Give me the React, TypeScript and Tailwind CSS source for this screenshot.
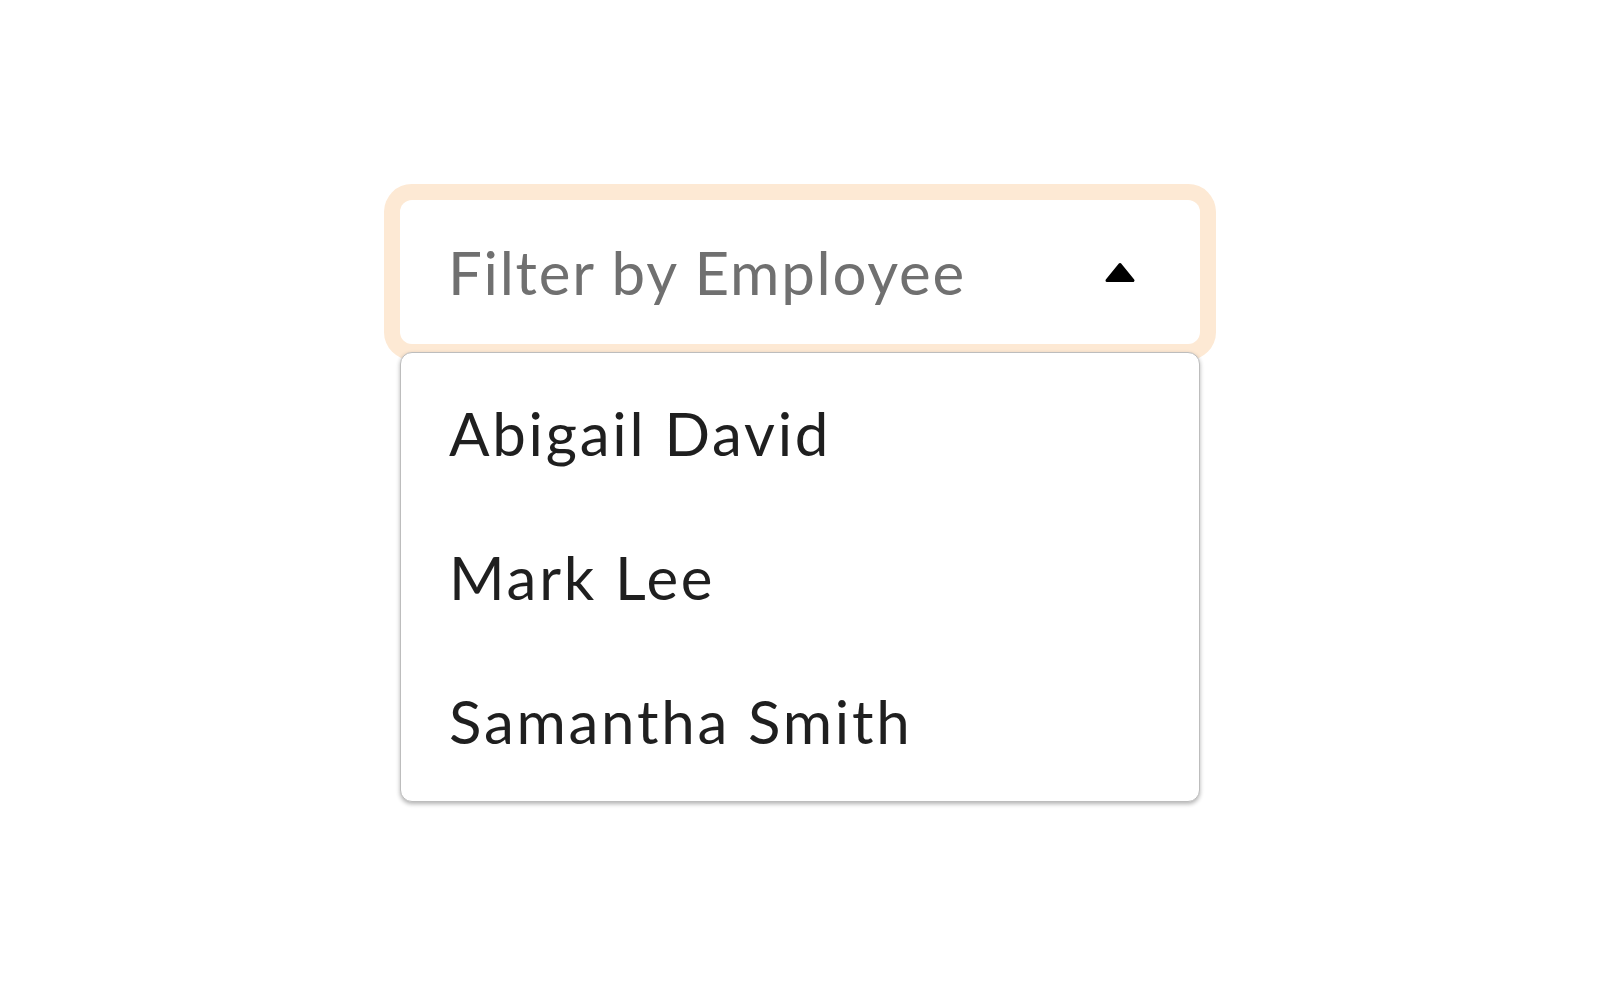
import { useState } from 'react';

const employees = ['Abigail David', 'Mark Lee', 'Samantha Smith'];

function CaretUp() {
  return (
    <svg width="32" height="22" viewBox="0 0 32 22" aria-hidden="true">
      <polygon
        points="3,19.5 16,3.5 29,19.5"
        fill="#000"
        stroke="#000"
        strokeWidth="3"
        strokeLinejoin="round"
      />
    </svg>
  );
}

export default function App() {
  const [open] = useState(true);

  return (
    <div className="min-h-screen bg-white pt-[200px] font-['Lato','Open_Sans',sans-serif]">
      <div className="relative mx-auto w-[800px]">
        {/* Select trigger */}
        <button
          type="button"
          className="flex h-[144px] w-full items-center justify-between rounded-[12px] bg-white pl-[48px] pr-[64px] ring-[16px] ring-[#fde9d4]"
        >
          <span className="text-[60px] leading-none tracking-[1.75px] text-[#707070]">
            Filter by Employee
          </span>
          <CaretUp />
        </button>

        {/* Options */}
        {open && (
          <ul className="absolute left-0 right-0 top-full mt-2 rounded-[12px] border border-[#bdbdbd] bg-white py-2 shadow-[0_2px_4px_rgba(0,0,0,0.3)]">
            {employees.map((name) => (
              <li
                key={name}
                className="flex h-[144px] items-center pl-[48px] text-[60px] leading-none tracking-[2.75px] text-[#1f1f1f]"
              >
                {name}
              </li>
            ))}
          </ul>
        )}
      </div>
    </div>
  );
}
